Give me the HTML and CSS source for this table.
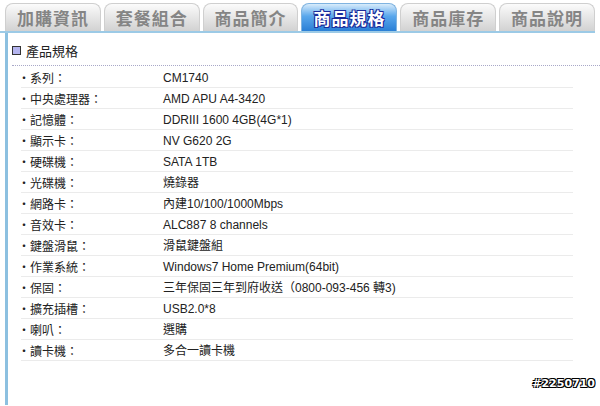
FILE: index.html
```html
<!DOCTYPE html>
<html lang="zh-Hant">
<head>
  <meta charset="utf-8">
  <title>商品規格</title>
  <link rel="stylesheet" href="styles.css">
</head>
<body>
  <div class="page">
    <div class="tabs">
      <div class="tab">加購資訊</div>
      <div class="tab">套餐組合</div>
      <div class="tab">商品簡介</div>
      <div class="tab active">商品規格</div>
      <div class="tab">商品庫存</div>
      <div class="tab">商品說明</div>
    </div>

    <div class="panel">
      <div class="title"><span class="square"></span>產品規格</div>

      <ul class="specs">
        <li><span class="label">・系列：</span><span class="value">CM1740</span></li>
        <li><span class="label">・中央處理器：</span><span class="value">AMD APU A4-3420</span></li>
        <li><span class="label">・記憶體：</span><span class="value">DDRIII 1600 4GB(4G*1)</span></li>
        <li><span class="label">・顯示卡：</span><span class="value">NV G620 2G</span></li>
        <li><span class="label">・硬碟機：</span><span class="value">SATA 1TB</span></li>
        <li><span class="label">・光碟機：</span><span class="value">燒錄器</span></li>
        <li><span class="label">・網路卡：</span><span class="value">內建10/100/1000Mbps</span></li>
        <li><span class="label">・音效卡：</span><span class="value">ALC887 8 channels</span></li>
        <li><span class="label">・鍵盤滑鼠：</span><span class="value">滑鼠鍵盤組</span></li>
        <li><span class="label">・作業系統：</span><span class="value">Windows7 Home Premium(64bit)</span></li>
        <li><span class="label">・保固：</span><span class="value">三年保固三年到府收送（0800-093-456 轉3)</span></li>
        <li><span class="label">・擴充插槽：</span><span class="value">USB2.0*8</span></li>
        <li><span class="label">・喇叭：</span><span class="value">選購</span></li>
        <li><span class="label">・讀卡機：</span><span class="value">多合一讀卡機</span></li>
      </ul>
    </div>

    <div class="stamp">#2250710</div>
  </div>
</body>
</html>
```

FILE: styles.css
```css
body {
  margin: 0;
  background: #fff;
  font-family: "Liberation Sans", "Noto Sans CJK TC", sans-serif;
  color: #222;
}

.page {
  position: relative;
  width: 600px;
  height: 406px;
  overflow: hidden;
}

.tabs {
  display: flex;
  gap: 3px;
  padding: 3px 0 0 5px;
  width: 590px;
  border-bottom: 2px solid #9ccae6;
}

.tab {
  width: 94px;
  height: 27px;
  line-height: 28px;
  text-align: center;
  border: 1px solid #cfcfcf;
  border-bottom: none;
  border-radius: 8px 8px 0 0;
  background: linear-gradient(#fbfbfb, #e6e6e6 50%, #d2d2d2);
  color: #858585;
  font-family: "Noto Sans CJK TC", sans-serif;
  font-size: 17px;
  font-weight: bold;
  letter-spacing: 1px;
}

.tab.active {
  border-color: #7fb3e0;
  background: linear-gradient(#d8ecfb, #5aa7ec 45%, #2a7fd6);
  color: #fff;
  text-shadow: -1px -1px 0 #1a2a9a, 1px -1px 0 #1a2a9a, -1px 1px 0 #1a2a9a, 1px 1px 0 #1a2a9a;
}

.panel {
  margin-left: 5px;
  height: 372px;
  border-left: 3px solid #8cc0e0;
  padding-left: 4px;
}

.title {
  display: flex;
  align-items: center;
  height: 29px;
  padding-top: 3px;
  border-bottom: 1px dotted #a8a8c8;
  font-family: "Noto Sans CJK TC", sans-serif;
  font-size: 13px;
  color: #222;
}

.square {
  width: 7px;
  height: 7px;
  margin-right: 5px;
  border: 1px solid #333;
  background: #b4b4ee;
}

.specs {
  list-style: none;
  margin: 1px 0 0 9px;
  padding: 0;
  width: 552px;
}

.specs li {
  display: flex;
  height: 20px;
  line-height: 22px;
  border-bottom: 1px solid #ebebeb;
  font-size: 12px;
}

.label {
  width: 142px;
  font-family: "Noto Sans CJK TC", sans-serif;
  margin-left: -3px;
}

.value {
  padding-left: 3px;
}

.stamp {
  position: absolute;
  right: 5px;
  bottom: 16px;
  font-family: "DejaVu Sans", sans-serif;
  font-size: 11px;
  font-weight: bold;
  color: #fff;
  text-shadow: -1px -1px 0 #000, 1px -1px 0 #000, -1px 1px 0 #000, 1px 1px 0 #000;
}
```
